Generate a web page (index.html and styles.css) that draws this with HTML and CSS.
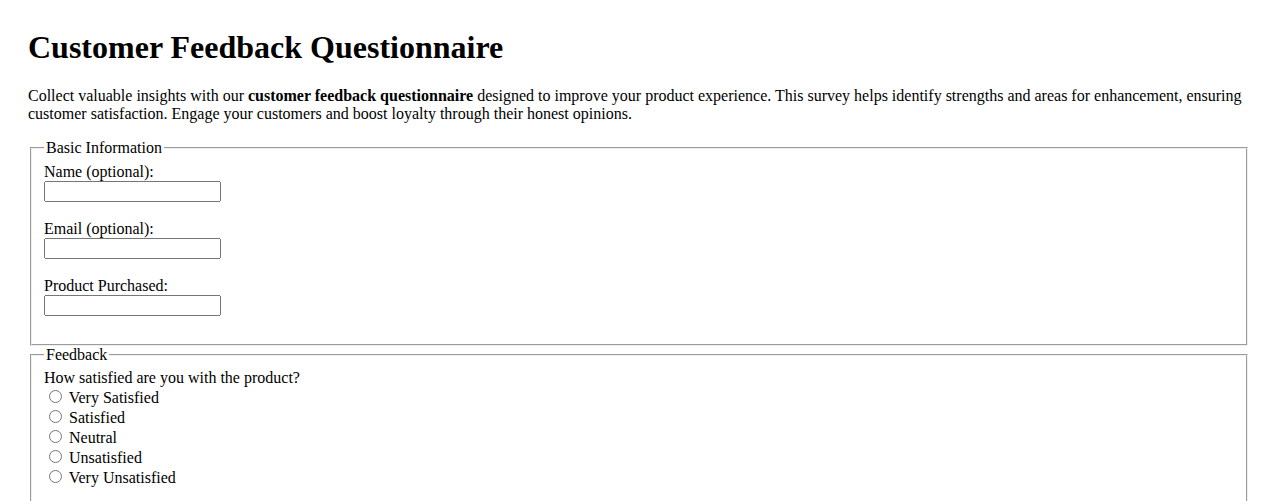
FILE: index.html
```html
<!DOCTYPE html>
<html>
<head>
<meta charset="utf-8">
<title>Customer Feedback Questionnaire</title>
<link rel="stylesheet" href="styles.css">
</head>
<body>
<h1 class="title">Customer Feedback Questionnaire</h1>
<p class="intro">Collect valuable insights with our <strong>customer feedback questionnaire</strong> designed to improve your product experience. This survey helps identify strengths and areas for enhancement, ensuring customer satisfaction. Engage your customers and boost loyalty through their honest opinions.</p>
<form class="survey">
<fieldset class="group">
<legend>Basic Information</legend>
<div class="field">
<label class="field-label" for="name">Name (optional):</label>
<input class="field-input" type="text" id="name">
</div>
<div class="field">
<label class="field-label" for="email">Email (optional):</label>
<input class="field-input" type="email" id="email">
</div>
<div class="field">
<label class="field-label" for="product">Product Purchased:</label>
<input class="field-input" type="text" id="product">
</div>
</fieldset>
<fieldset class="group">
<legend>Feedback</legend>
<div class="question">How satisfied are you with the product?</div>
<div class="options">
<label class="option"><input type="radio" name="sat"> Very Satisfied</label>
<label class="option"><input type="radio" name="sat"> Satisfied</label>
<label class="option"><input type="radio" name="sat"> Neutral</label>
<label class="option"><input type="radio" name="sat"> Unsatisfied</label>
<label class="option"><input type="radio" name="sat"> Very Unsatisfied</label>
</div>
</fieldset>
</form>
</body>
</html>
```
FILE: styles.css
```css
body {
  margin: 0;
  padding: 29px 28px 28px;
  font-family: "Liberation Serif", "Times New Roman", serif;
  font-size: 16px;
  color: #000;
  background: #fff;
}
.title {
  margin: 0 0 21px;
  font-size: 32px;
}
.intro {
  margin: 0 0 16px;
}
.survey {
  margin: 0;
}
.group {
  margin: 0 2px;
}
.field {
  margin-bottom: 18px;
}
.field-label {
  display: block;
}
.field-input {
  display: block;
  margin: 0;
  width: 177px;
  height: 21px;
  box-sizing: border-box;
}
.options {
  margin-bottom: 24px;
}
.option {
  display: block;
  height: 20px;
}
```
